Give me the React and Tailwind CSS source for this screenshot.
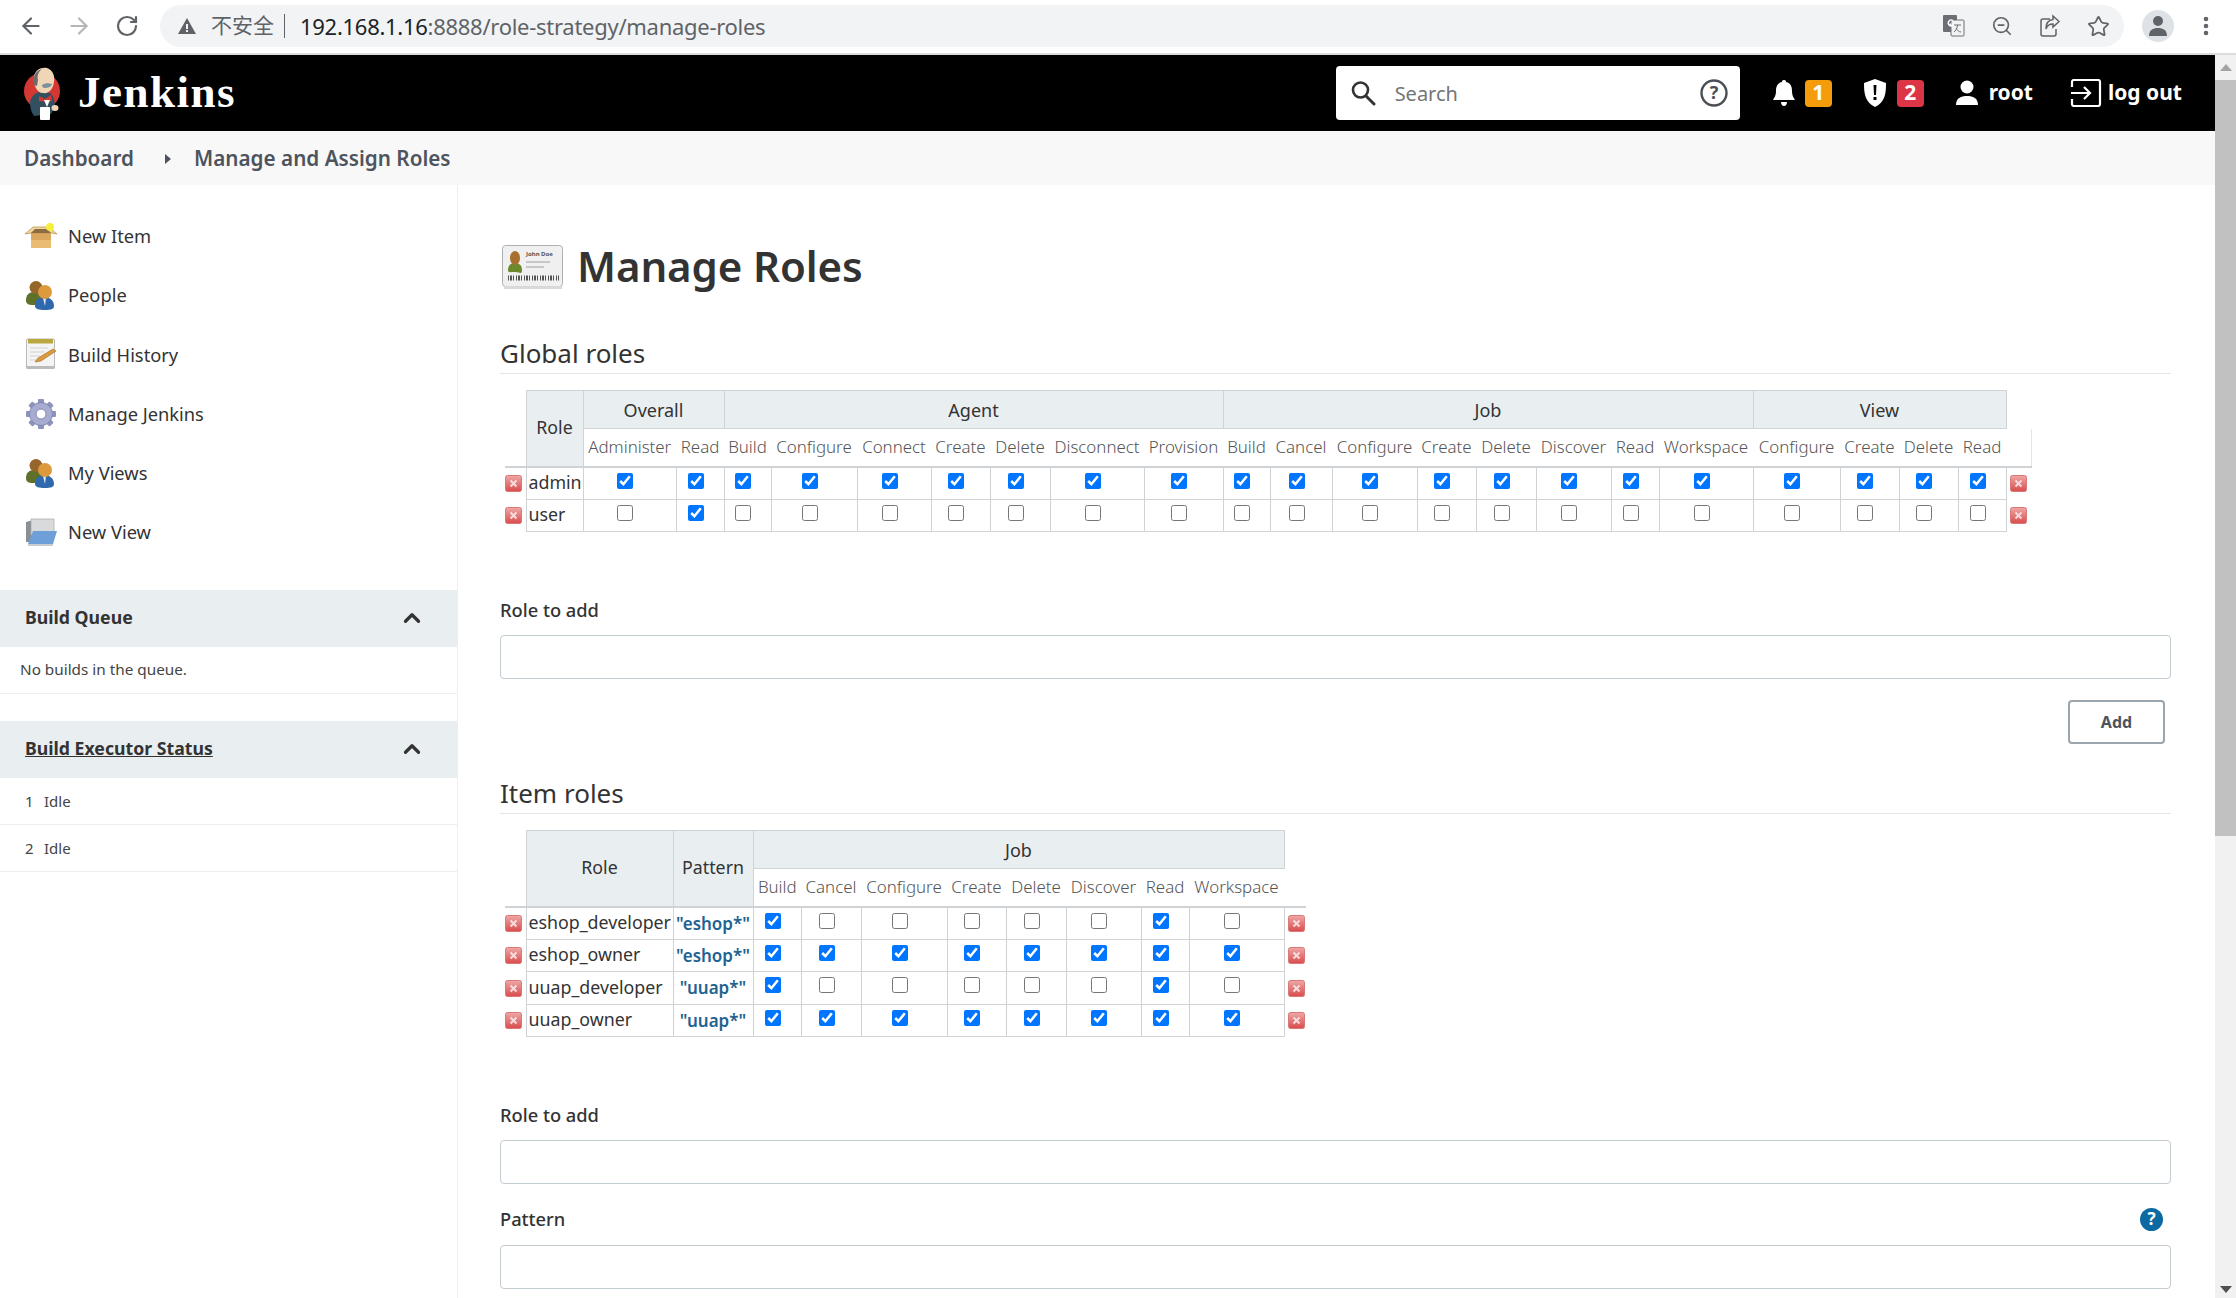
import { ArrowLeft, ArrowRight, ChevronUp, EllipsisVertical, RotateCw, Star, ZoomOut } from "lucide-react";

const sans = "font-['Noto_Sans','Noto_Sans_CJK_SC',sans-serif]";

function JenkinsLogo() {
  return (
    <svg width="38" height="55" viewBox="0 0 38 55" className="shrink-0">
      <circle cx="19" cy="25" r="18" fill="#d33833" />
      <path d="M7 36c1-6 6-10 11-10l9 1c4 3 5 9 5 14l-4 7-17 2c-3-4-4-9-4-14z" fill="#335061" />
      <path d="M11 11C12 4 18 1 24 2c6 2 8 8 7 14-1 7-5 12-11 11-6 0-10-8-9-16z" fill="#f0d6b7" />
      <path d="M11 19c-2-7 1-14 8-16-4 3-5 7-4 11l-1 6z" fill="#6d6b6d" />
      <path d="M19 19c3-2 7-2 10-1-1 3-4 4-7 4-2 0-3-1-3-3z" fill="#49728b" opacity=".7" />
      <path d="M16 30l6 3 6-4 1 6-6 1-7-1z" fill="#d33833" />
      <path d="M21 34l3 7 3-7z" fill="#fff" />
      <rect x="17" y="41" width="10" height="13" rx="1" fill="#fff" />
      <ellipse cx="32" cy="42" rx="3.5" ry="3" fill="#f0d6b7" />
    </svg>
  );
}

function BoxIcon() {
  return (
    <svg width="32" height="26" viewBox="0 0 32 26">
      <path d="M6 10h20v13a2 2 0 0 1-2 2H8a2 2 0 0 1-2-2z" fill="#dba75e" />
      <rect x="6" y="17" width="20" height="8" fill="#e9bb73" />
      <path d="M0 11l8-7h16l8 7-6-1H6z" fill="#f0d49b" stroke="#b98c4e" strokeWidth=".7" />
      <path d="M6 10l4-4h12l4 4z" fill="#8b6b3f" />
      <circle cx="25" cy="4" r="4" fill="#f4ee3d" />
    </svg>
  );
}

function PeopleIcon() {
  return (
    <svg width="30" height="30" viewBox="0 0 30 30">
      <path d="M1 20c0-5 3-8 8-8s9 4 9 8-3 5-8 5-9 0-9-5z" fill="#5f7028" />
      <circle cx="11" cy="7.5" r="6.5" fill="#96652c" />
      <path d="M10 26c0-6 4-9 9-9s10 3 10 9c0 3-3 4-9 4s-10-1-10-4z" fill="#2f68ad" />
      <path d="M18 18h3l-1 8z" fill="#e8eef6" />
      <circle cx="20" cy="12" r="7" fill="#dd9a3d" />
    </svg>
  );
}

function NotepadIcon() {
  return (
    <svg width="32" height="32" viewBox="0 0 32 32">
      <rect x="1.5" y="1" width="28" height="29" rx="1" fill="#f4f4f2" stroke="#b9b9b9" />
      <rect x="1.5" y="28" width="28" height="3" fill="#bcbcbc" />
      <rect x="3" y="1" width="25" height="4.5" fill="#b9a83f" />
      <path d="M5 10h18M5 14h14M5 18h10M5 22h8" stroke="#cfd3d6" />
      <path d="M10 24l3-4 15-9 3 2-15 10z" fill="#dc9a3a" stroke="#9c6a28" strokeWidth=".6" />
    </svg>
  );
}

function GearIcon() {
  const teeth = [0, 45, 90, 135, 180, 225, 270, 315];
  return (
    <svg width="32" height="32" viewBox="0 0 32 32">
      {teeth.map((a) => (
        <rect key={a} x="13" y="1" width="6" height="8" rx="1" fill="#8d93bd" transform={`rotate(${a} 16 16)`} />
      ))}
      <circle cx="16" cy="16" r="11.5" fill="#a7acd0" stroke="#8187b2" />
      <circle cx="16" cy="16" r="5" fill="#fff" stroke="#8187b2" />
    </svg>
  );
}

function FolderIcon() {
  return (
    <svg width="32" height="29" viewBox="0 0 32 29">
      <path d="M1 4l7-2v22H1z" fill="#8b8f95" />
      <path d="M6 1h23v16H6z" fill="#d9dadb" stroke="#a7a9ab" strokeWidth=".7" />
      <path d="M8 13h24l-4 13H3z" fill="#6f9fd8" />
      <rect x="3" y="26" width="25" height="2" fill="#c9ccd0" />
    </svg>
  );
}

function IdCardIcon() {
  return (
    <svg width="62" height="44" viewBox="0 0 62 44" className="shrink-0">
      <rect x=".5" y=".5" width="60" height="41" rx="3" fill="#f0f0f0" stroke="#aeb0b2" />
      <rect x="2" y="41" width="58" height="3" fill="#d9d9d9" />
      <path d="M6 25c0-5 3-7 7-7s7 2 7 7-2 2-7 2-7 1-7-2z" fill="#6b8a2e" />
      <ellipse cx="13" cy="13" rx="5" ry="7" fill="#a8702c" />
      <text x="24" y="11" fontSize="6" fontWeight="700" fill="#555" fontFamily="Noto Sans">John Doe</text>
      <path d="M24 17h24M24 22h18" stroke="#c4c6c8" strokeWidth="2" />
      <path d="M6 33h51" stroke="#555" strokeWidth="5" strokeDasharray="1 1 2 1 1 2" />
    </svg>
  );
}

function DeleteIcon() {
  return (
    <svg width="17" height="17" viewBox="0 0 17 17" className="block">
      <defs>
        <linearGradient id="delRed" x1="0" y1="0" x2="0" y2="1">
          <stop offset="0" stopColor="#eea8a8" />
          <stop offset="1" stopColor="#d94c4c" />
        </linearGradient>
      </defs>
      <rect x=".5" y=".5" width="16" height="16" rx="2" fill="url(#delRed)" stroke="#dd7777" />
      <path d="M5.5 5.5l6 6M11.5 5.5l-6 6" stroke="#f7dcdc" strokeWidth="2" />
    </svg>
  );
}

function BrowserBar() {
  return (
    <div className={`flex h-[55px] items-center border-b-2 border-[#dcdcdc] bg-white pb-px ${sans}`}>
      <div className="flex w-[160px] shrink-0 items-center gap-[22px] pl-[18px] text-[#5f6368]">
        <ArrowLeft size={26} strokeWidth={2} />
        <ArrowRight size={26} strokeWidth={2} className="text-[#b3b5b8]" />
        <RotateCw size={24} strokeWidth={2.2} className="ml-[1px]" />
      </div>
      <div className="flex h-[42px] w-[1964px] items-center rounded-full bg-[#f1f3f4] pr-[14px] pl-[18px]">
        <svg width="18" height="16" viewBox="0 0 18 16" className="shrink-0">
          <path d="M9 0l9 16H0z" fill="#5f6368" />
          <path d="M8 6h2v5H8zM8 12h2v2H8z" fill="#f1f3f4" />
        </svg>
        <span className="ml-[15px] text-[21px] text-[#5f6368]">不安全</span>
        <span className="ml-[10px] h-[24px] w-px bg-[#5f6368]" />
        <span className="ml-[15px] text-[22px] tracking-[-0.28px] text-[#202124]">
          192.168.1.16<span className="text-[#5f6368]">:8888/role-strategy/manage-roles</span>
        </span>
        <div className="ml-auto flex items-center gap-[26px] text-[#5f6368]">
          <svg width="22" height="22" viewBox="0 0 22 22">
            <rect x="0" y="0" width="14" height="17" rx="1" fill="#6b6f74" />
            <rect x="8" y="5" width="13" height="16" rx="1" fill="#f1f3f4" stroke="#6b6f74" />
            <path d="M10 5.5a3 3 0 1 0 0 5h-2.500v-2" fill="none" stroke="#fff" strokeWidth="1.400" />
            <path d="M11 10h7M14.500 10c0 3-2 6-3.500 7M13 13c1 2 3 4 5 4" fill="none" stroke="#6b6f74" />
          </svg>
          <ZoomOut size={22} strokeWidth={1.8} />
          <svg width="22" height="24" viewBox="0 0 22 24" fill="none" stroke="#5f6368" strokeWidth="1.500">
            <path d="M11 5H4a2 2 0 0 0-2 2v13a2 2 0 0 0 2 2h11a2 2 0 0 0 2-2v-5" />
            <path d="M14 2l6 5.500-6 5.500V10c-4 0-6 2-7 5 0-5 2-9 7-9.500z" />
          </svg>
          <Star size={23} strokeWidth={1.8} />
        </div>
      </div>
      <div className="ml-[18px] flex h-[32px] w-[32px] items-center justify-center rounded-full bg-[#dee1e6]">
        <svg width="20" height="22" viewBox="0 0 20 22">
          <circle cx="10" cy="6" r="5" fill="#5f6368" />
          <path d="M1 21c0-6 4-8 9-8s9 2 9 8z" fill="#5f6368" />
        </svg>
      </div>
      <EllipsisVertical size={24} strokeWidth={2.6} className="ml-[20px] text-[#5f6368]" />
    </div>
  );
}

function JenkinsHeader() {
  return (
    <header className="flex h-[76px] items-center bg-black pl-[23px] text-white">
      <JenkinsLogo />
      <span className="ml-[17px] font-['Liberation_Serif',serif] text-[45px] font-bold tracking-[1.5px]">Jenkins</span>
      <div className="ml-auto flex h-[54px] w-[404px] items-center rounded bg-white pr-[12px] pl-[14px]">
        <svg width="26" height="26" viewBox="0 0 26 26" className="shrink-0">
          <circle cx="10.500" cy="10" r="7.500" fill="none" stroke="#333" strokeWidth="2.600" />
          <path d="M16 16l8 8" stroke="#333" strokeWidth="3" strokeLinecap="round" />
        </svg>
        <span className={`mt-[2px] ml-[19px] text-[20px] text-[#757575] ${sans}`}>Search</span>
        <svg width="28" height="28" viewBox="0 0 28 28" className="ml-auto">
          <circle cx="14" cy="14" r="12.500" fill="none" stroke="#4b4f55" strokeWidth="2.400" />
          <text x="14" y="20" textAnchor="middle" fontSize="18" fontWeight="700" fill="#4b4f55" fontFamily="Noto Sans">?</text>
        </svg>
      </div>
      <div className={`mr-[33px] ml-[32px] flex items-center text-[21px] font-bold ${sans}`}>
        <svg width="24" height="28" viewBox="0 0 24 28">
          <path d="M12 1c2 0 2 1 2 2 5 1 6 5 6 9 0 5 2 7 3 9H1c1-2 3-4 3-9 0-4 1-8 6-9 0-1 0-2 2-2z" fill="#fff" />
          <path d="M9 23h6c0 2-1 4-3 4s-3-2-3-4z" fill="#fff" />
        </svg>
        <span className="ml-[9px] flex h-[27px] w-[27px] items-center justify-center rounded bg-[#f59c0a]">1</span>
        <svg width="24" height="30" viewBox="0 0 24 30" className="ml-[31px]">
          <path d="M12 1l11 4c0 11-1 19-11 24C2 24 1 16 1 5z" fill="#fff" />
          <path d="M10.500 7h3l-.5 10h-2zM10.500 19h3v3h-3z" fill="#000" />
        </svg>
        <span className="ml-[10px] flex h-[27px] w-[27px] items-center justify-center rounded bg-[#dc3545]">2</span>
        <svg width="24" height="26" viewBox="0 0 24 26" className="ml-[31px]">
          <circle cx="12" cy="7" r="6.500" fill="#fff" />
          <path d="M1 25c0-7 5-9 11-9s11 2 11 9z" fill="#fff" />
        </svg>
        <span className="ml-[10px]">root</span>
        <svg width="32" height="28" viewBox="0 0 32 28" className="ml-[37px]">
          <path d="M2 8V3a2 2 0 0 1 2-2h24a2 2 0 0 1 2 2v22a2 2 0 0 1-2 2H4a2 2 0 0 1-2-2v-5" fill="none" stroke="#fff" strokeWidth="2.200" />
          <path d="M1 14h19M14 8l6 6-6 6" fill="none" stroke="#fff" strokeWidth="2.200" />
        </svg>
        <span className="ml-[6px]">log out</span>
      </div>
    </header>
  );
}

function Breadcrumb() {
  return (
    <nav className={`flex h-[54px] items-center bg-[#f8f8f8] pt-[1px] pl-[24px] text-[20.7px] font-semibold text-[#4d545d] ${sans}`}>
      <span>Dashboard</span>
      <svg width="6" height="10" viewBox="0 0 6 10" className="mr-[23px] ml-[31px]">
        <path d="M0 0l6 5-6 5z" fill="#4d545d" />
      </svg>
      <span>Manage and Assign Roles</span>
    </nav>
  );
}

const sideItems = [
  { label: "New Item", icon: <BoxIcon /> },
  { label: "People", icon: <PeopleIcon /> },
  { label: "Build History", icon: <NotepadIcon /> },
  { label: "Manage Jenkins", icon: <GearIcon /> },
  { label: "My Views", icon: <PeopleIcon /> },
  { label: "New View", icon: <FolderIcon /> },
];

function PanelHead({ title, underline }) {
  return (
    <div className="flex h-[57px] items-center bg-[#e9eef1] pr-[32px] pl-[25px] text-[17.7px] font-bold text-[#333]">
      <span className={`mb-[3px] ${underline ? "underline" : ""}`}>{title}</span>
      <ChevronUp size={26} strokeWidth={3} className="ml-auto" />
    </div>
  );
}

function Sidebar() {
  return (
    <aside className={`w-[458px] shrink-0 border-r border-[#eaeff2] pt-[21px] ${sans}`}>
      {sideItems.map((item) => (
        <div key={item.label} className="flex h-[59.3px] items-center text-[18.3px] text-[#333]">
          <div className="flex w-[68px] shrink-0 justify-start pl-[25px]">{item.icon}</div>
          <span>{item.label}</span>
        </div>
      ))}
      <div className="mt-[28px]">
        <PanelHead title="Build Queue" />
        <div className="flex h-[47px] items-center border-b border-[#eaeff2] pl-[20px] text-[15.3px] text-[#444]">No builds in the queue.</div>
      </div>
      <div className="mt-[27px]">
        <PanelHead title="Build Executor Status" underline />
        <div className="flex h-[47px] items-center border-b border-[#eaeff2] pl-[25px] text-[15px] text-[#444]">
          <span className="w-[19px]">1</span>Idle
        </div>
        <div className="flex h-[47px] items-center border-b border-[#eaeff2] pl-[25px] text-[15px] text-[#444]">
          <span className="w-[19px]">2</span>Idle
        </div>
      </div>
    </aside>
  );
}

function RoleTable({ groups, roleCols, rows, widths, trailing }) {
  const cols = groups.flatMap((g) => g.cols);
  const cell = "border border-[#cfd3d6]";
  return (
    <table className="table-fixed border-collapse text-[17.8px] leading-none text-[#333]">
      <colgroup>
        {widths.map((w, i) => (
          <col key={i} style={{ width: w }} />
        ))}
      </colgroup>
      <thead>
        <tr className="h-[38px]">
          <th className="font-normal" />
          {roleCols.map((c) => (
            <th key={c} rowSpan={2} className={`${cell} bg-[#e9eef1] font-normal`}>{c}</th>
          ))}
          {groups.map((g) => (
            <th key={g.name} colSpan={g.cols.length} className={`${cell} bg-[#e9eef1] text-[18px] font-normal`}>{g.name}</th>
          ))}
          <th className="font-normal" />
        </tr>
        <tr className="h-[38px] border-b-2 border-[#cfd3d6]">
          <th className="border-b-0 font-normal" />
          {cols.map((c, i) => (
            <th key={i} className="border-t border-[#cfd3d6] px-0 text-[16.9px] font-light whitespace-nowrap text-[#555]">{c}</th>
          ))}
          <th className={`border-0 font-normal ${trailing ? "relative" : ""}`}>
            {trailing && <span className="absolute top-0 right-0 h-full w-px bg-[#e3e6e8]" />}
          </th>
        </tr>
      </thead>
      <tbody>
        {rows.map((row) => (
          <tr key={row.role} className="h-[32.5px]">
            <td className="pt-[1px]"><DeleteIcon /></td>
            <td className={`${cell} pl-[2px] whitespace-nowrap`}>{row.role}</td>
            {row.pattern && (
              <td className={`${cell} text-center text-[17px] font-semibold whitespace-nowrap text-[#1f6391]`}>{row.pattern}</td>
            )}
            {row.checks.map((on, i) => (
              <td key={i} className={`${cell} pr-[9px] text-center align-top`}>
                <input type="checkbox" defaultChecked={on} className="mt-[5px] h-4 w-4 align-top accent-[#0075ff]" />
              </td>
            ))}
            <td className="pt-[1px] pl-[3px]"><DeleteIcon /></td>
          </tr>
        ))}
      </tbody>
    </table>
  );
}

const globalGroups = [
  { name: "Overall", cols: ["Administer", "Read"] },
  { name: "Agent", cols: ["Build", "Configure", "Connect", "Create", "Delete", "Disconnect", "Provision"] },
  { name: "Job", cols: ["Build", "Cancel", "Configure", "Create", "Delete", "Discover", "Read", "Workspace"] },
  { name: "View", cols: ["Configure", "Create", "Delete", "Read"] },
];
const globalWidths = [21, 57, 93, 48, 47, 86, 74, 59, 60, 94, 79, 47, 62, 85, 59, 60, 75, 48, 94, 87, 59, 59, 48, 26];
const globalRows = [
  { role: "admin", checks: Array(21).fill(true) },
  { role: "user", checks: Array.from({ length: 21 }, (_, i) => i === 1) },
];

const itemGroups = [{ name: "Job", cols: ["Build", "Cancel", "Configure", "Create", "Delete", "Discover", "Read", "Workspace"] }];
const itemWidths = [21, 147, 80, 48, 60, 86, 59, 60, 75, 48, 95, 22];
const devChecks = [true, false, false, false, false, false, true, false];
const ownerChecks = Array(8).fill(true);
const itemRows = [
  { role: "eshop_developer", pattern: '"eshop*"', checks: devChecks },
  { role: "eshop_owner", pattern: '"eshop*"', checks: ownerChecks },
  { role: "uuap_developer", pattern: '"uuap*"', checks: devChecks },
  { role: "uuap_owner", pattern: '"uuap*"', checks: ownerChecks },
];

function SectionHead({ children, className }) {
  return (
    <h2 className={`flex h-[41px] items-start border-b border-[#e3e6e8] text-[26px] leading-[40px] font-normal text-[#333] ${className}`}>{children}</h2>
  );
}

function Label({ children, className }) {
  return <div className={`flex h-[26px] items-center text-[18.3px] font-medium text-[#333] ${className}`}>{children}</div>;
}

function TextBox({ className }) {
  return <input type="text" className={`block h-[44px] w-full rounded border border-[#c3ccd1] bg-white ${className}`} />;
}

function Main() {
  return (
    <main className={`min-w-0 flex-1 pr-[44px] pl-[42px] ${sans}`}>
      <div className="mt-[51px] flex h-[62px] items-center pl-[2px]">
        <IdCardIcon />
        <h1 className="mb-[4px] ml-[13px] text-[42px] font-semibold tracking-[-0.1px] text-[#333]">Manage Roles</h1>
      </div>
      <SectionHead className="mt-[35px]">Global roles</SectionHead>
      <div className="mt-[16px] ml-[5px]">
        <RoleTable groups={globalGroups} roleCols={["Role"]} rows={globalRows} widths={globalWidths} trailing />
      </div>
      <Label className="mt-[65px]">Role to add</Label>
      <TextBox className="mt-[12px]" />
      <div className="mt-[21px] flex justify-end pr-[6px]">
        <button className="h-[44px] w-[97px] rounded border-2 border-[#9aa5ad] bg-white text-[16px] font-bold text-[#4d545d]">Add</button>
      </div>
      <SectionHead className="mt-[29px]">Item roles</SectionHead>
      <div className="mt-[16px] ml-[5px]">
        <RoleTable groups={itemGroups} roleCols={["Role", "Pattern"]} rows={itemRows} widths={itemWidths} />
      </div>
      <Label className="mt-[65px]">Role to add</Label>
      <TextBox className="mt-[12px]" />
      <Label className="mt-[22px] justify-between pr-[8px]">
        Pattern
        <span className="flex h-[23px] w-[23px] items-center justify-center rounded-full bg-[#0b6aa2] text-[17px] font-bold text-white">?</span>
      </Label>
      <TextBox className="mt-[13px]" />
    </main>
  );
}

function Scrollbar() {
  return (
    <div className="flex w-[21px] shrink-0 flex-col items-center bg-[#f1f1f1] pt-[9px]">
      <svg width="12" height="7" viewBox="0 0 12 7"><path d="M6 0l6 7H0z" fill="#a3a3a3" /></svg>
      <div className="mt-[9px] h-[756px] w-full bg-[#c1c1c1]" />
      <svg width="12" height="7" viewBox="0 0 12 7" className="mt-auto mb-[5px]"><path d="M6 7L0 0h12z" fill="#505050" /></svg>
    </div>
  );
}

export default function App() {
  return (
    <div className="flex h-[1298px] w-[2236px] flex-col overflow-hidden bg-white">
      <BrowserBar />
      <div className="flex min-h-0 flex-1">
        <div className="flex w-[2215px] shrink-0 flex-col">
          <JenkinsHeader />
          <Breadcrumb />
          <div className="flex min-h-0 flex-1 overflow-hidden">
            <Sidebar />
            <Main />
          </div>
        </div>
        <Scrollbar />
      </div>
    </div>
  );
}
